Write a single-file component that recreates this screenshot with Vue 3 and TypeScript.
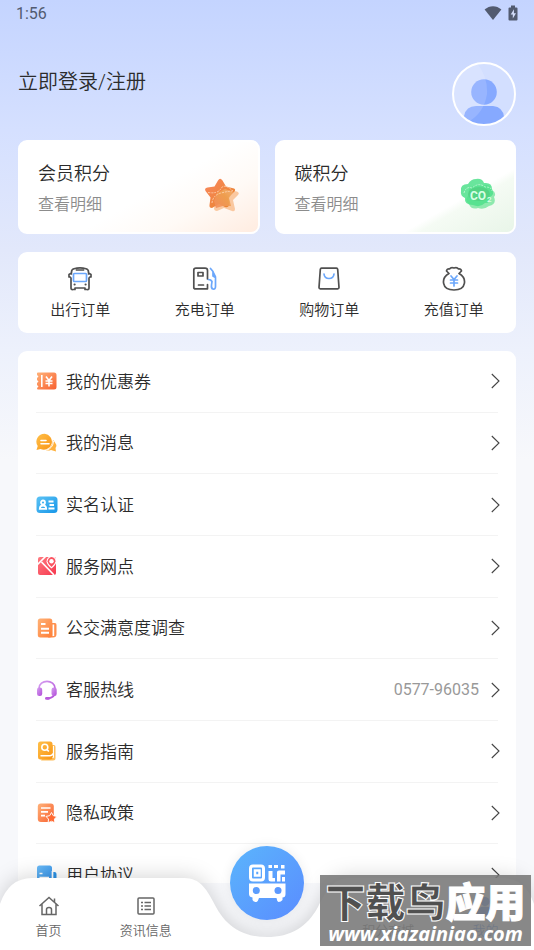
<script setup lang="ts">
interface PointCard {
  kind: 'star' | 'carbon'
  title: string
}
interface Entry {
  icon: string
  label: string
  note?: string
}

const cards: PointCard[] = [
  { kind: 'star', title: '会员积分' },
  { kind: 'carbon', title: '碳积分' },
]

const orders: Entry[] = [
  { icon: 'bus', label: '出行订单' },
  { icon: 'charge', label: '充电订单' },
  { icon: 'shop', label: '购物订单' },
  { icon: 'purse', label: '充值订单' },
]

const entries: Entry[] = [
  { icon: 'coupon', label: '我的优惠券' },
  { icon: 'message', label: '我的消息' },
  { icon: 'identity', label: '实名认证' },
  { icon: 'map', label: '服务网点' },
  { icon: 'survey', label: '公交满意度调查' },
  { icon: 'headset', label: '客服热线', note: '0577-96035' },
  { icon: 'guide', label: '服务指南' },
  { icon: 'privacy', label: '隐私政策' },
  { icon: 'terms', label: '用户协议' },
]
</script>

<template>
  <div class="page">
    <svg class="defs" width="0" height="0" aria-hidden="true">
      <defs>
        <linearGradient id="g-orange" x1="0" y1="0" x2="1" y2="1"><stop offset="0" stop-color="#ffb27a" /><stop offset="1" stop-color="#f8602f" /></linearGradient>
        <linearGradient id="g-amber" x1="0" y1="0" x2="1" y2="1"><stop offset="0" stop-color="#ffc04a" /><stop offset="1" stop-color="#f99413" /></linearGradient>
        <linearGradient id="g-sky" x1="0" y1="0" x2="1" y2="1"><stop offset="0" stop-color="#5cc3f5" /><stop offset="1" stop-color="#1796e8" /></linearGradient>
        <linearGradient id="g-red" x1="0" y1="0" x2="1" y2="1"><stop offset="0" stop-color="#ff7a80" /><stop offset="1" stop-color="#f6384f" /></linearGradient>
        <linearGradient id="g-peach" x1="0" y1="0" x2="1" y2="1"><stop offset="0" stop-color="#ffb277" /><stop offset="1" stop-color="#ff7d35" /></linearGradient>
        <linearGradient id="g-violet" x1="0" y1="0" x2="1" y2="1"><stop offset="0" stop-color="#d6a0f0" /><stop offset="1" stop-color="#b04bd8" /></linearGradient>
        <linearGradient id="g-blue" x1="0" y1="0" x2="1" y2="1"><stop offset="0" stop-color="#6cbcf7" /><stop offset="1" stop-color="#2f8ee8" /></linearGradient>
      </defs>
    </svg>

    <div class="scroll">
      <header class="status">
        <span>1:56</span>
        <svg width="34" height="16" viewBox="0 0 34 16" aria-hidden="true">
          <path d="M.6 4.600C5.500 0 12.500 0 17.400 4.600L9 15Z" fill="#525b70" />
          <path d="M25.500 2.500H27V.5h4v2h1.500q1 0 1 1V14.500q0 1-1 1H25.500q-1 0-1-1V3.500q0-1 1-1Z" fill="#525b70" />
          <path d="M30 4.300 26.700 9.400h2.100v4.100L32 8.200h-2.100Z" fill="#d3ddfa" />
        </svg>
      </header>

      <section class="profile">
        <a class="login" href="#login">立即登录/注册</a>
        <svg class="avatar" width="64" height="64" viewBox="0 0 64 64" role="img" aria-label="头像">
          <clipPath id="face"><circle cx="32" cy="32" r="31" /></clipPath>
          <g clip-path="url(#face)">
            <rect width="64" height="64" fill="#d3dfff" />
            <circle cx="32" cy="30" r="12.800" fill="#86a9ff" />
            <path d="M12 64V54Q14 44 24 44H41Q51 45 52 55V64Z" fill="#86a9ff" />
            <path d="M0 0H24Q36 14 35 32 32 51 16 60L0 64Z" fill="#fff" opacity=".15" />
          </g>
          <circle cx="32" cy="32" r="31" fill="none" stroke="#fff" stroke-width="2" />
        </svg>
      </section>

      <section class="cards">
        <a v-for="c in cards" :key="c.kind" class="card" :class="c.kind" href="#points">
          <span class="card-text">
            <strong>{{ c.title }}</strong>
            <small>查看明细</small>
          </span>
          <svg v-if="c.kind === 'star'" width="36" height="36" viewBox="0 0 36 36" aria-hidden="true">
            <defs>
              <linearGradient id="star-back" x1="0" y1="0" x2="1" y2="1"><stop offset="0" stop-color="#f9875f" /><stop offset="1" stop-color="#e88428" /></linearGradient>
              <linearGradient id="star-front" x1="0" y1="1" x2="1" y2="0"><stop offset="0" stop-color="#f38b5d" /><stop offset=".6" stop-color="#eea04f" /><stop offset="1" stop-color="#f3b478" /></linearGradient>
            </defs>
            <path d="M17 15 21 12.500 33 14.500Q36 16 34 18L29 23 31 32Q31 35 28 34L20 31 13 34Q10 34 10 31Z" fill="#fac8a0" />
            <path d="M14 3.500Q16 0 18.500 3.500L22 9.500 30 11.500Q32 12.500 30.500 14.500L24.500 20 25 28.500Q24 31 21 30L15 27 8 31Q5 31 5.500 28L6.500 20.500 1.500 14Q0 11 3.500 10.500L10.500 9.500Z" fill="url(#star-back)" />
            <path d="M13 16 21 12 29 15 25 21 27 29 19 29 12 31 10 24Z" fill="url(#star-front)" opacity=".9" />
            <path d="M4 15.500Q14 17 17 11.500T29 14M8 26Q9 18 17 16T29 14" fill="none" stroke="#ffd8b9" stroke-width=".8" stroke-dasharray="2 1" />
          </svg>
          <svg v-else width="36" height="36" viewBox="0 0 36 36" aria-hidden="true">
            <path d="M9 12Q15 6 22 9 30 6 32 13 37 16 34 20 37 27 29 29 24 33 18 31 11 33 9 27 4 23 8 19Z" fill="#8ee9ae" />
            <path d="M1 14Q0 7 8 7 11 2 16 2 22 1 24 6 32 5 32 12 35 17 30 20 31 26 25 26 20 31 13 28 4 28 5 21 0 19 1 14Z" fill="#4fe08b" opacity=".85" />
            <ellipse cx="19" cy="17" rx="11" ry="7" fill="#50c97d" opacity=".6" />
            <path d="M4 16Q6 9 12 11 19 5 25 10 32 10 32 14" fill="none" stroke="#c9f8da" stroke-width=".8" stroke-dasharray="2 1" />
            <text x="10" y="23" class="co">CO</text><text x="27" y="25" class="co sub">2</text>
          </svg>
        </a>
      </section>

      <nav class="orders" aria-label="订单">
        <a v-for="o in orders" :key="o.icon" href="#orders">
          <svg width="26" height="26" viewBox="0 0 26 26" fill="none" stroke="#505050" stroke-width="1.700" stroke-linecap="round" stroke-linejoin="round" aria-hidden="true">
            <template v-if="o.icon === 'bus'">
              <path d="M4.500 8V6Q4.500 3.500 7 2.800 13 1 19 2.800 21.500 3.500 21.500 6V8M4.500 7 2 8.500V11M21.500 7 24 8.500V11M3 11 4 12V22Q4 24 6 23.500H8V22H18V23.500H20Q22 24 22 22V12L23 11M9.500 4H16.500" />
              <rect x="6.500" y="7.500" width="13" height="8" rx="1" stroke="#6ba7fb" />
              <path d="M7.500 18.500h.2M18.500 18.500h.2" stroke-width="2" />
            </template>
            <template v-else-if="o.icon === 'charge'">
              <path d="M1.800 22V4Q1.800 2.200 4 2.200H13Q15.500 2.200 15.500 4.500V13M15.500 18.500V22.800H3.500Q1.800 22.800 1.800 21.500M6 6.500H11V10H6ZM6.500 19H11.500" />
              <path d="M18.500 2.500 21 5.500V10L23.500 11.500V20.500Q23.500 23.500 21 23 19 22.500 19.500 19L20 15.500Q19 13.500 16.500 13.500M21 6 23.500 11" stroke="#6ba7fb" />
            </template>
            <template v-else-if="o.icon === 'shop'">
              <path d="M5.500 2.200H20.500Q21.500 2.200 21.700 3.500L23 21.500Q23 22.800 21.700 22.800H4.300Q3 22.800 3 21.500L4.300 3.500Q4.500 2.200 5.500 2.200Z" />
              <path d="M8 8Q8.500 12.500 13 12.500T18 8" stroke="#6ba7fb" />
            </template>
            <template v-else>
              <path d="M8 7.500 5.500 5Q6 2.500 8.500 3 10 .8 13 2 16 .8 17.500 3 20 2.500 20.500 5L18 7.500C26 12 26 24 13 24S0 12 8 7.500Z" />
              <path d="M10 10 13 13.500 16 10M9.500 14h7M9.500 17h7M13 14v6" stroke="#6ba7fb" />
            </template>
          </svg>
          <span>{{ o.label }}</span>
        </a>
      </nav>

      <nav class="list" aria-label="服务">
        <a v-for="e in entries" :key="e.icon" href="#service">
          <svg width="22" height="22" viewBox="0 0 22 22" aria-hidden="true">
            <g v-if="e.icon === 'coupon'">
              <path d="M1 3Q1 2.500 2 2.500H18Q20.500 2.500 20.500 5V17Q20.500 19.500 18 19.500H2Q1 19.500 1 18L2.500 16.500 1 15V13L2.500 11.500 1 10V8L2.500 6.500 1 5Z" fill="url(#g-orange)" />
              <path d="M5.800 5V17M10 6.500 13 10.500 16 6.500M9.500 11h7M9.500 13.500h7M13 10.500v6" fill="none" stroke="#fff" stroke-width="1.600" />
            </g>
            <g v-else-if="e.icon === 'message'">
              <path d="M17 8Q22 13 19.500 16L20 19.500 15 18Q12 19 10 18 16 16 17 8Z" fill="#ffb13d" />
              <path d="M8.700 1.700A8.200 8 0 1 1 4.500 17L.5 18 1.700 14A8.200 8 0 0 1 8.700 1.700Z" fill="url(#g-amber)" />
              <path d="M17.500 9Q17 16 11 18" fill="none" stroke="#fff" />
              <path d="M5 8.500H10M5 11.800H13" stroke="#fff" stroke-width="1.600" stroke-linecap="round" />
            </g>
            <g v-else-if="e.icon === 'identity'">
              <rect x=".5" y="2.500" width="21" height="16.500" rx="3.500" fill="url(#g-sky)" />
              <g fill="none" stroke="#fff" stroke-width="1.800"><circle cx="7" cy="8.500" r="2" /><path d="M3.800 14.800Q4 11.500 7 11.500T10.200 14.800ZM12.500 7.500H17.500M13.500 11H18M12.500 14.500H18.500" /></g>
            </g>
            <g v-else-if="e.icon === 'map'">
              <rect x="2" y="2" width="18" height="18" rx="2" fill="url(#g-red)" />
              <path d="M1 10 10 1M5.500 7 18 20" stroke="#fff" stroke-width="1.700" />
              <path d="M15.500 1Q20.800 1.500 20.500 6.500 20 10 15.500 13.500 11 10 10.500 6.500 11 1.500 15.500 1Z" fill="#fff" />
              <path d="M15.500 2Q19.500 2.500 19.500 6.500 19 9 15.500 12 12 9 11.500 6.500 12 2.500 15.500 2Z" fill="#fb5360" />
              <circle cx="15.500" cy="6.300" r="2.200" fill="#fff" />
            </g>
            <g v-else-if="e.icon === 'survey'">
              <path d="M15 6h4Q20.500 6 20.500 8V17Q20.500 20.500 17 20.500H12Z" fill="#ff8f4c" />
              <path d="M17.300 7.500V19" stroke="#fff" stroke-width="1.800" />
              <rect x="1.800" y="1.500" width="14.500" height="19" rx="2.500" fill="url(#g-peach)" />
              <path d="M5 7H9.500M5 11.800H13M5 15.800H13" stroke="#fff" stroke-width="2" />
            </g>
            <g v-else-if="e.icon === 'headset'">
              <path d="M3 12V9.500C3 0 19 0 19 9.500V13Q19 19 11 19.500" fill="none" stroke="url(#g-violet)" stroke-width="1.800" />
              <rect x="1" y="8.500" width="5.200" height="8.500" rx="2.200" fill="url(#g-violet)" /><rect x="15.500" y="8.500" width="5.200" height="8.500" rx="2.200" fill="url(#g-violet)" />
              <rect x="9" y="18" width="5" height="2.800" rx="1.400" fill="#b95bdc" />
            </g>
            <g v-else-if="e.icon === 'guide'">
              <path d="M15 5h3Q19.500 5 19.500 7V18Q19.500 20.500 17 20.500H5Z" fill="#fdbe5b" />
              <path d="M17.500 6V17.500H5" fill="none" stroke="#fff" />
              <rect x="2" y="1.500" width="14.500" height="18" rx="2.500" fill="url(#g-amber)" />
              <g fill="none" stroke="#fff" stroke-width="1.600"><circle cx="8.800" cy="7.300" r="3" /><path d="M11 9.500 12.800 11.500M4.500 15.800H14Q16.500 15.500 17 13.500" /></g>
            </g>
            <g v-else-if="e.icon === 'privacy'">
              <rect x="1.800" y="1.500" width="16" height="18.500" rx="3" fill="url(#g-orange)" />
              <path d="M5 6H14.500M5 9.800H12M5 13.600H9" stroke="#fff" stroke-width="1.700" />
              <path d="m15.500 10.500 1.800 3.200 3.700.7-2.500 2.700.4 3.700-3.400-1.500-3.400 1.500.4-3.700L10 14.400l3.700-.7Z" fill="#ff6a33" stroke="#fff" />
            </g>
            <g v-else>
              <path d="M16 8h2.500Q20.500 8 20.500 10V18Q20.500 20 18.500 20H14Z" fill="#2c92e5" />
              <rect x="1" y="1.500" width="15" height="18.500" rx="2.500" fill="url(#g-blue)" />
              <path d="M3.500 9.500H6.500M3.500 13.500H13M16.500 7V20" stroke="#fff" stroke-width="1.700" />
            </g>
          </svg>
          <span class="label">{{ e.label }}</span>
          <span v-if="e.note" class="note">{{ e.note }}</span>
          <svg class="chevron" width="9" height="16" viewBox="0 0 9 16" aria-hidden="true"><path d="M.8 1 8 8 .8 15" fill="none" stroke="#444" stroke-width="1.100" /></svg>
        </a>
      </nav>
    </div>

    <nav class="tabs" aria-label="主导航">
      <svg class="shape" viewBox="0 0 534 72" preserveAspectRatio="none" aria-hidden="true">
        <path d="M0 72V26Q9 0 32 0H184C201 0 207 12 216 29 227 49 243 59 267 59S307 49 318 29C327 12 333 0 350 0H502Q525 0 534 26V72Z" fill="#fff" />
      </svg>
      <a class="tab" href="#home">
        <svg width="22" height="22" viewBox="0 0 22 22" fill="none" stroke="#666" stroke-width="1.500" aria-hidden="true"><path d="M1.500 11 11 2.500 20.500 11M4 9V19.500H18V9M16.500 7V3.500M8.500 19V14.500Q8.500 12.500 11 12.500T13.500 14.500V19" /></svg>
        首页
      </a>
      <a class="tab" href="#news">
        <svg width="22" height="22" viewBox="0 0 22 22" fill="none" stroke="#666" stroke-width="1.500" aria-hidden="true"><rect x="3" y="3" width="16" height="16" rx="1" /><path d="M6 7.500h2M6 11h2M6 14.500h2M9.500 7.500H16M9.500 11H16M9.500 14.500H16" /></svg>
        资讯信息
      </a>
      <div class="middle">
        <button class="scan" type="button" aria-label="乘车码">
          <svg width="74" height="74" viewBox="0 0 74 74" aria-hidden="true">
            <rect x="20.500" y="20" width="13" height="14" rx="2.500" fill="none" stroke="#fff" stroke-width="3" />
            <rect x="25" y="24.500" width="4.500" height="5" fill="none" stroke="#fff" stroke-width="2.500" />
            <path d="M38.500 19H42V22H38.500ZM44 19H48V22H44ZM51 19H54.500V22.500H51ZM38.500 25H42.500V32H45V35.500H41Q38.500 35.500 38.500 33ZM47 26Q47 24.500 49 24.500H55V28.500H50.500V35.500H47ZM52 31H55V35.500H52Z" fill="#fff" />
            <path d="M19 37.500H55.500V48Q55.500 51.500 52.500 51.500V54Q51 56 48.500 56 47 55.500 46.500 52H29Q28 55.500 26.500 56 23.500 56 22.500 54V51.500Q19 51 19 48Z" fill="#fff" />
            <circle cx="26.300" cy="44.500" r="3.500" fill="#5b9dfe" /><circle cx="48" cy="44.500" r="3.500" fill="#5b98ff" />
          </svg>
        </button>
      </div>
      <a class="tab" href="#mall">
        <svg width="22" height="22" viewBox="0 0 22 22" fill="none" stroke="#666" stroke-width="1.500" aria-hidden="true"><path d="M4 7H18V19H4ZM8 10V5Q8 3 11 3T14 5V10" /></svg>
        积分商城
      </a>
      <a class="tab active" href="#me">
        <svg width="22" height="22" viewBox="0 0 22 22" fill="#4c86ee" aria-hidden="true"><circle cx="11" cy="6.500" r="4.500" /><path d="M2 20Q2 11.500 11 11.500T20 20Z" /></svg>
        我的
      </a>
    </nav>

    <aside class="mark">
      <div class="mark-name"><span>下载鸟</span>应用</div>
      <div class="mark-url">www.xiazainiao.com</div>
    </aside>
  </div>
</template>

<style>
body {
  margin: 0;
}
</style>

<style scoped>
.page {
  position: relative;
  display: flex;
  flex-direction: column;
  height: 100vh;
  overflow: hidden;
  background: linear-gradient(#c4d4ff 0, #d5e0ff 130px, #e2e8fb 250px, #edf1fc 350px, #f7f8fb 460px);
  color: #2b2b2b;
  font-family: Roboto, "Noto Sans CJK SC", sans-serif;
  font-weight: 350;
}
.defs {
  position: absolute;
}
a {
  color: inherit;
  text-decoration: none;
}
svg {
  display: block;
  flex: none;
}
.scroll {
  flex: 1;
  min-height: 0;
  overflow: hidden auto;
  scrollbar-width: none;
  padding: 0 18px;
}
.status {
  display: flex;
  align-items: center;
  justify-content: space-between;
  height: 26px;
  margin: 0 -2px;
  color: #525b70;
  font-size: 16px;
  font-weight: 400;
}
.profile {
  display: flex;
  justify-content: space-between;
  padding-top: 36px;
}
.login {
  padding-top: 5px;
  font-size: 20px;
  line-height: 30px;
}
.cards {
  display: grid;
  grid-template-columns: 1fr 1fr;
  gap: 15px;
  margin-top: 14px;
}
.card {
  display: flex;
  align-items: center;
  justify-content: space-between;
  padding: 18px 18px 14px;
  border: 2px solid #fff;
  border-radius: 9px;
}
.card svg {
  margin-top: 12px;
}
.star {
  background: linear-gradient(150deg, #fff 55%, #fffaf6 75%, #ffece0);
}
.carbon {
  background: linear-gradient(150deg, #fff 72%, #f5fbf4 76%, #e8f5e8);
}
.card-text {
  display: flex;
  flex-direction: column;
  gap: 4px;
}
.card strong {
  font-size: 18px;
  font-weight: 350;
  line-height: 28px;
}
.card small {
  color: #8c8c8c;
  font-size: 16px;
  line-height: 26px;
}
.co {
  fill: #d7ffe5;
  font-size: 12px;
  font-weight: 700;
}
.sub {
  font-size: 8px;
}
.orders {
  display: grid;
  grid-template-columns: repeat(4, 1fr);
  margin-top: 18px;
  padding: 14px 0 10px;
  border-radius: 9px;
  background: #fff;
}
.orders a {
  display: flex;
  flex-direction: column;
  align-items: center;
  gap: 5px;
  font-size: 15px;
  line-height: 26px;
}
.list {
  display: grid;
  grid-auto-rows: 1fr;
  min-height: 555px;
  margin-top: 18px;
  padding: 0 18px;
  border-radius: 9px;
  background: #fff;
}
.list a {
  display: flex;
  align-items: center;
  border-bottom: 1px solid #f3f3f3;
  font-size: 17px;
}
.label {
  flex: 1;
  margin-left: 8px;
  padding-bottom: 2px;
}
.note {
  margin-right: 12px;
  color: #999;
  font-size: 16px;
  font-weight: 400;
}
.chevron {
  margin-right: -2px;
}
.tabs {
  position: relative;
  display: flex;
  height: 67px;
  color: #666;
  font-size: 13px;
}
.shape {
  position: absolute;
  left: 0;
  bottom: 0;
  width: 100%;
  height: 72px;
  filter: drop-shadow(0 -2px 10px rgba(0, 0, 0, 0.16));
}
.tab {
  position: relative;
  display: flex;
  flex: 2;
  flex-direction: column;
  align-items: center;
  gap: 4px;
  padding-top: 12px;
  line-height: 20px;
}
.active {
  color: #4c86ee;
}
.middle {
  position: relative;
  display: flex;
  flex: 3;
  justify-content: center;
}
.scan {
  align-self: flex-start;
  margin-top: -37px;
  padding: 0;
  border: 0;
  border-radius: 50%;
  background: linear-gradient(135deg, #5bb5fc, #5a8cff);
  box-shadow: 0 0 12px rgba(0, 0, 0, 0.08);
}
.mark {
  position: absolute;
  right: 3px;
  bottom: 4px;
  display: flex;
  flex-direction: column;
  align-items: center;
  width: 211px;
  height: 71px;
  background: rgba(119, 119, 119, 0.88);
  color: #fff;
  font-weight: 900;
  white-space: nowrap;
}
.mark-name {
  font-size: 40px;
  line-height: 58px;
  height: 49px;
  -webkit-text-stroke: 1px #fff;
}
.mark-name span {
  color: #505050;
}
.mark-url {
  font-family: "Noto Sans", sans-serif;
  font-size: 20px;
  font-style: italic;
  font-weight: 700;
  line-height: 20px;
}
</style>
